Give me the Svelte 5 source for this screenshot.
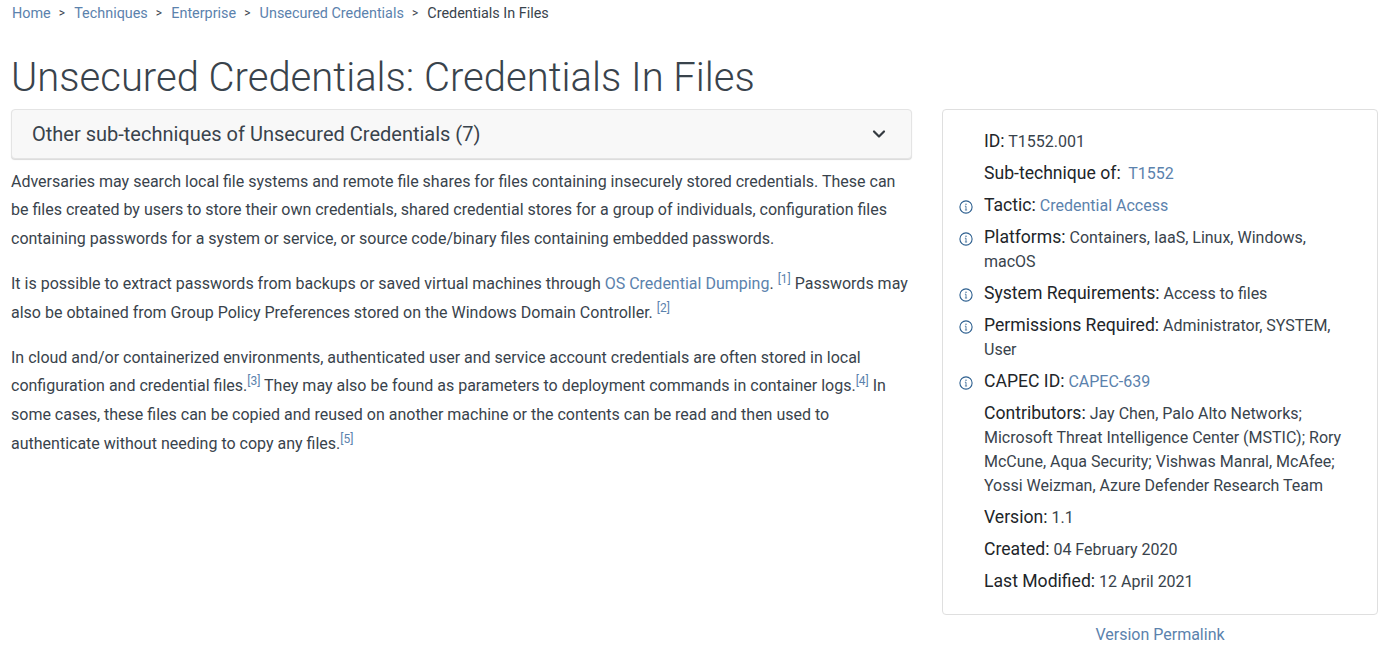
<script>
    const crumbs = ["Home", "Techniques", "Enterprise", "Unsecured Credentials"];

    const card = [
        { label: "ID", value: "T1552.001" },
        { label: "Sub-technique of", link: "T1552", gap: true },
        { label: "Tactic", link: "Credential Access", info: true },
        { label: "Platforms", value: "Containers, IaaS, Linux, Windows, macOS", info: true },
        { label: "System Requirements", value: "Access to files", info: true },
        { label: "Permissions Required", value: "Administrator, SYSTEM, User", info: true },
        { label: "CAPEC ID", link: "CAPEC-639", info: true },
        { label: "Contributors", value: "Jay Chen, Palo Alto Networks; Microsoft Threat Intelligence Center (MSTIC); Rory McCune, Aqua Security; Vishwas Manral, McAfee; Yossi Weizman, Azure Defender Research Team" },
        { label: "Version", value: "1.1" },
        { label: "Created", value: "04 February 2020" },
        { label: "Last Modified", value: "12 April 2021" },
    ];
</script>

<div class="page">
    <nav class="crumbs">
        {#each crumbs as c}
            <a href="#x" class="link">{c}</a><span class="sep">&gt;</span>
        {/each}
        <span>Credentials In Files</span>
    </nav>

    <h1>Unsecured Credentials: Credentials In Files</h1>

    <div class="columns">
        <main>
            <div class="accordion">
                <span>Other sub-techniques of Unsecured Credentials (7)</span>
                <svg width="16" height="16" viewBox="0 0 16 16" fill="none" stroke="#343a40" stroke-width="2.2" stroke-linecap="round" stroke-linejoin="round"><path d="M3 5.5 8 10.5l5-5"/></svg>
            </div>
            <p>Adversaries may search local file systems and remote file shares for files containing insecurely stored credentials. These can be files created by users to store their own credentials, shared credential stores for a group of individuals, configuration files containing passwords for a system or service, or source code/binary files containing embedded passwords.</p>
            <p>It is possible to extract passwords from backups or saved virtual machines through <a href="#x" class="link">OS Credential Dumping</a>. <sup><a href="#x" class="link">[1]</a></sup> Passwords may also be obtained from Group Policy Preferences stored on the Windows Domain Controller. <sup><a href="#x" class="link">[2]</a></sup></p>
            <p>In cloud and/or containerized environments, authenticated user and service account credentials are often stored in local configuration and credential files.<sup><a href="#x" class="link">[3]</a></sup> They may also be found as parameters to deployment commands in container logs.<sup><a href="#x" class="link">[4]</a></sup> In some cases, these files can be copied and reused on another machine or the contents can be read and then used to authenticate without needing to copy any files.<sup><a href="#x" class="link">[5]</a></sup></p>
        </main>

        <aside>
            <div class="card">
                {#each card as row}
                    <div class="row">
                        {#if row.info}
                            <svg class="info" width="14" height="14" viewBox="0 0 14 14" fill="none" stroke="#2d5f8f"><circle cx="7" cy="7" r="6.1" stroke-width="1.1"/><path d="M7 6.2v3.6M5.9 10h2.2M5.9 6.2H7" stroke-width="1" stroke-opacity="0.8"/><circle cx="7" cy="4.2" r=".8" fill="#2d5f8f" fill-opacity="0.8" stroke="none"/></svg>
                        {/if}
                        <span class="label">{row.label}:</span>
                        {#if row.link}<a href="#x" class="link" class:gap={row.gap}>{row.link}</a>{:else}<span>{row.value}</span>{/if}
                    </div>
                {/each}
            </div>
            <a href="#x" class="link permalink">Version Permalink</a>
        </aside>
    </div>
</div>

<style>
    :global(body) {
        background: #fff;
    }

    .page {
        font-family: Roboto, sans-serif;
        color: #39434c;
        font-size: 16px;
        padding: 0 16px 0 11px;
    }

    .link {
        color: #5b82ad;
        text-decoration: none;
    }

    .crumbs {
        display: flex;
        font-size: 14.4px;
        line-height: 21px;
        padding: 3px 0 0 1px;
    }

    .sep {
        margin: 0 9.2px 0 8px;
        font-size: 12px;
    }

    h1 {
        font-size: 40px;
        font-weight: 300;
        line-height: 48px;
        margin: 30px 0 7px;
    }

    .columns {
        display: flex;
        gap: 30px;
        align-items: flex-start;
    }

    main {
        width: 901px;
        flex: none;
    }

    .accordion {
        display: flex;
        justify-content: space-between;
        align-items: center;
        height: 50px;
        box-sizing: border-box;
        padding: 0 24px 0 20px;
        background: #f8f8f8;
        border: 1px solid #e4e4e4;
        border-radius: 4px;
        box-shadow: 0 1px 1px rgba(0, 0, 0, 0.15);
        font-size: 20px;
        margin-bottom: 8.6px;
    }

    p {
        font-size: 16px;
        line-height: 28.8px;
        margin: 0 0 16px;
    }

    sup {
        font-size: 12px;
        line-height: 0;
    }

    aside {
        width: 436px;
        flex: none;
    }

    .card {
        border: 1px solid #dfdfdf;
        border-radius: 4px;
        padding: 20px 16px 20px 41px;
    }

    .row {
        position: relative;
        font-size: 16px;
        line-height: 24px;
        margin-bottom: 8px;
    }

    .row:last-child {
        margin-bottom: 0;
    }

    .label {
        font-size: 17.6px;
        line-height: 1;
        color: #212529;
    }

    .gap {
        margin-left: 3.5px;
    }

    .info {
        position: absolute;
        left: -25px;
        top: 6px;
    }

    .permalink {
        display: block;
        text-align: center;
        margin-top: 8px;
        line-height: 24px;
    }
</style>
